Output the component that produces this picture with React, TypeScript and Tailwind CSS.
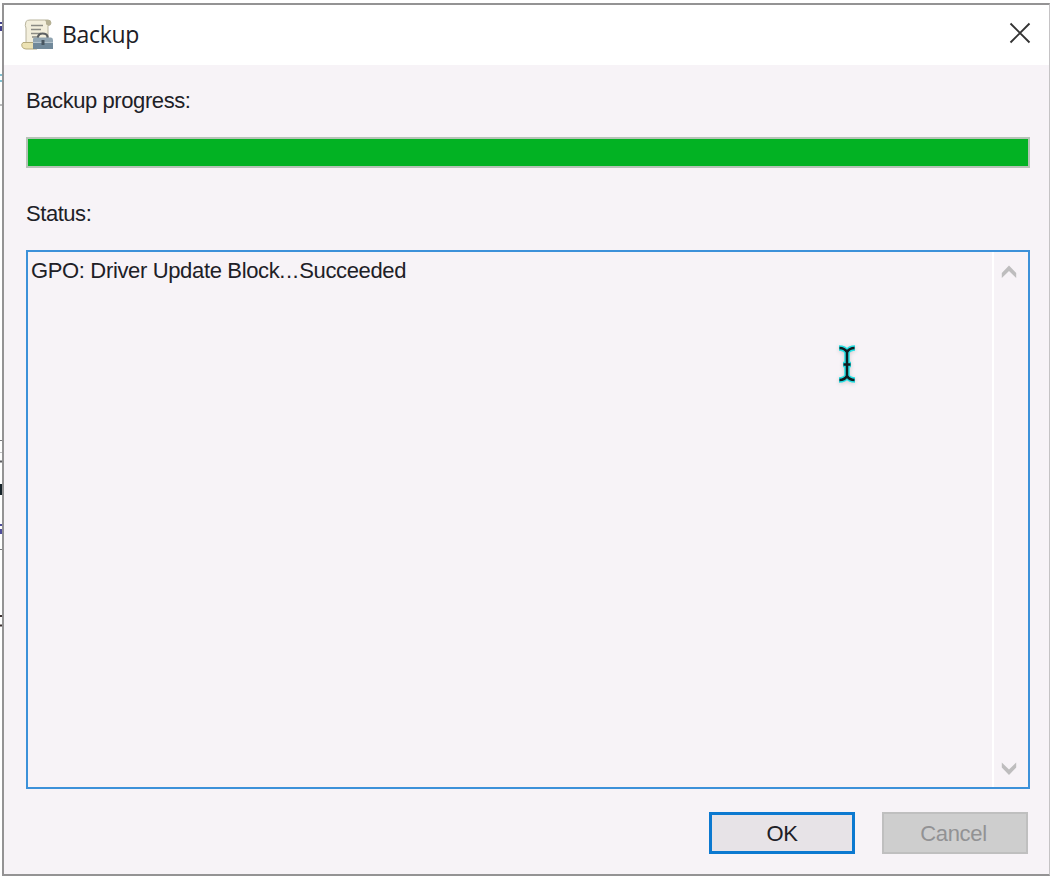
import { useState } from 'react';

const LOG_LINES = [{ name: 'GPO: Driver Update Block', result: 'Succeeded' }];

function BackupIcon() {
  return (
    <svg className="w-8 h-8" viewBox="0 0 32 32" fill="none">
      <path d="M5 2.500Q6 1 9 1H27Q30 1 30 4Q30 6.500 27 6.500V25H5V9Q3.500 7 5 2.500Z" fill="#f3efdc" stroke="#b9b49d" strokeWidth="1" />
      <path d="M24 1H27Q30 1 30 4Q30 6.500 27 6.500Q24.500 6 25 3Z" fill="#b5b092" />
      <path d="M10 6.500H22M10 10.500H20M10 14.500H20M11 18H17" stroke="#8b8b84" strokeWidth="1.600" />
      <path d="M2 23.500Q0 25 1 27.500Q2 30 5 30H16V23.500Z" fill="#ece2b3" stroke="#b5aa7d" strokeWidth="1" />
      <path d="M17 20V17.500Q18 14.500 21.500 14.500Q26 14.500 26.500 17.500V20" stroke="#5c6062" strokeWidth="2.200" />
      <path d="M12 20Q12 18.500 14 18.500H30Q32 18.500 32 21V30H12Z" fill="#91a5b2" />
      <path d="M12 24H32V30H12Z" fill="#71899a" />
      <path d="M12 23.500H32" stroke="#b3c2cb" />
      <path d="M20.500 21H23.500V26H20.500Z" fill="#485661" />
    </svg>
  );
}

function ScrollArrow({ down }: { down?: boolean }) {
  return (
    <svg className="w-4 h-4" viewBox="0 0 16 16">
      <path
        d={down ? 'M.8 1.500L8 8.500L15.200 1.500V6.500L8 14L.8 6.500Z' : 'M.8 14L8 7L15.200 14V9L8 1.500L.8 9Z'}
        fill="#bebdbe"
      />
    </svg>
  );
}

// Part of the parent console that shows to the left of the dialog
function ConsoleEdge() {
  return (
    <div className="w-[2px] shrink-0 h-full bg-white overflow-hidden">
      <svg className="w-[2px] h-[883px]" viewBox="0 0 2 883">
        <path d="M0 22H2V24H0M0 26H3V31H0" fill="#43408a" />
        <path d="M0 74H2V76H0M0 80H2V82H0" fill="#80bfd0" />
        <path d="M0 105H3M0 440.500H3M0 549.500H3" stroke="#77777a" />
        <path d="M0 452.500H3" stroke="#c0c0c2" />
        <path d="M0 461.500H3" stroke="#5d5d61" strokeWidth="2" />
        <path d="M0 484H3V495H0Z" fill="#162229" />
        <path d="M0 524H2V526H0ZM0 529H3V534H0Z" fill="#504e9b" />
        <path d="M0 616H3M0 625.500H3" stroke="#3d3032" strokeWidth="2" />
      </svg>
    </div>
  );
}

export default function App() {
  const [open, setOpen] = useState(true);

  return (
    <div className="w-[1050px] h-[883px] bg-white flex overflow-hidden relative text-[#202026] text-[22px] font-['Liberation_Sans',Arial,sans-serif]">
      <ConsoleEdge />
      {open && (
        <div className="mt-[3px] w-[1048px] h-[873px] flex flex-col bg-[#f7f3f7] border-t-2 border-b-2 border-l-2 border-r border-[#949394] border-r-[#c5c3c5]">
          <div className="h-[60px] shrink-0 bg-white flex items-center pl-[17px] pr-[18px]">
            <BackupIcon />
            <h1 className="ml-[9px] -mt-[3px] text-[23px] leading-8 tracking-[-0.3px] font-['Open_Sans','Noto_Sans',sans-serif]">Backup</h1>
            <button onClick={() => setOpen(false)} aria-label="Close" className="ml-auto -mt-1">
              <svg className="w-[22px] h-[22px]" viewBox="0 0 22 22">
                <path d="M1.500 1.500L20.500 20.500M20.500 1.500L1.500 20.500" stroke="#333" strokeWidth="1.900" />
              </svg>
            </button>
          </div>

          <div className="flex-1 flex flex-col pl-[22px] pr-[19px]">
            <p className="mt-6 h-6 leading-6 tracking-[-0.42px]">Backup progress:</p>
            <div className="mt-6 h-[31px] border-2 border-[#b6c3b7] bg-[#e6e6e6]">
              <div className="h-full w-full bg-[#02b223]" />
            </div>

            <p className="mt-[34px] h-6 leading-6 tracking-[-0.45px]">Status:</p>
            <div className="mt-6 h-[539px] border-2 border-[#3c91d9] flex">
              <div className="flex-1 pl-[3px] pt-[7px] leading-6 tracking-[-0.35px]">
                {LOG_LINES.map((line) => (
                  <p key={line.name}>
                    {line.name}<span className="tracking-[0.5px]">...</span>{line.result}
                  </p>
                ))}
              </div>
              <div className="w-9 border-l-2 border-white flex flex-col items-center justify-between pt-[12px] pb-[10px] pr-1">
                <ScrollArrow />
                <ScrollArrow down />
              </div>
            </div>

            <div className="mt-[23px] mr-[2px] flex justify-end gap-[27px]">
              <button onClick={() => setOpen(false)} className="w-[146px] h-[42px] border-[3px] border-[#0c79d0] bg-[#e7e3e7] tracking-[-0.5px]">
                OK
              </button>
              <button disabled className="w-[146px] h-[42px] border-2 border-[#bfbfbf] bg-[#cecece] text-[#929294] tracking-[-0.3px] pr-[3px]">
                Cancel
              </button>
            </div>
          </div>
        </div>
      )}

      <svg className="absolute left-[836px] top-[344px] w-[22px] h-[40px] drop-shadow-sm" viewBox="0 0 22 40" fill="none">
        <path d="M3 4Q8.500 4 11 8Q13.500 4 19 4M11 8V32M3 36Q8.500 36 11 32Q13.500 36 19 36M7 20.500H15" stroke="#25e0e4" strokeWidth="5.500" />
        <path d="M3.500 4Q8.500 4 11 8Q13.500 4 18.500 4M11 8V32M3.500 36Q8.500 36 11 32Q13.500 36 18.500 36M7.500 20.500H14.500" stroke="#101c20" strokeWidth="2.500" />
      </svg>
    </div>
  );
}
